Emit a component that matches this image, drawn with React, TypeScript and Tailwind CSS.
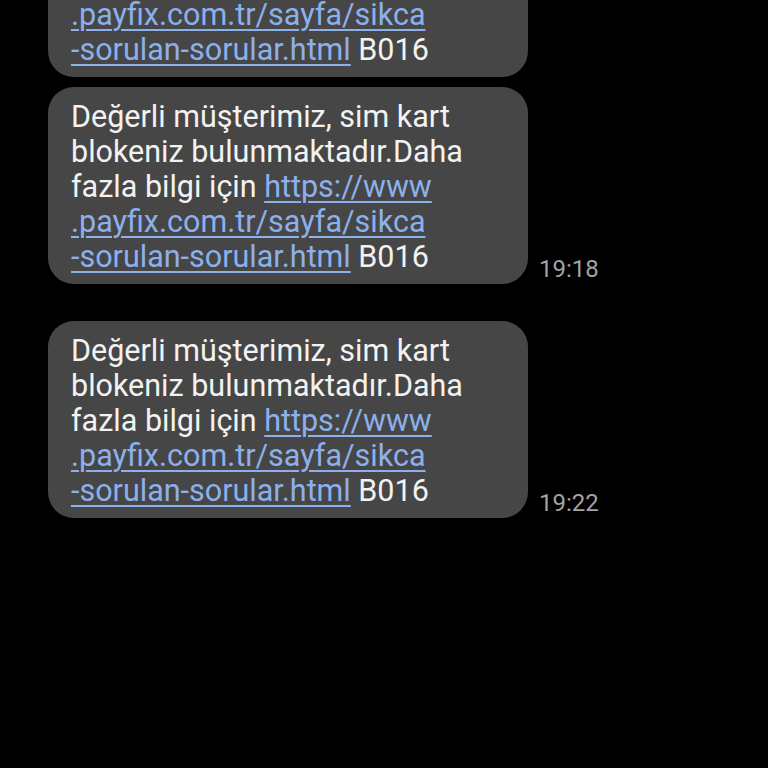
const messages = [
  { id: 1, time: "", groupGap: false },
  { id: 2, time: "19:18", groupGap: false },
  { id: 3, time: "19:22", groupGap: true },
];

function Bubble() {
  return (
    <div className="w-[480px] shrink-0 rounded-[26px] bg-[#464646] pl-[23px] pr-4 pt-[12px] pb-[10px] text-[30.5px] leading-[35px] text-[#f2f2f2]">
      Değerli müşterimiz, sim kart
      <br />
      blokeniz bulunmaktadır.Daha
      <br />
      fazla bilgi için{" "}
      <span className="text-[#8cb0ec] underline decoration-[1.5px] underline-offset-[4px]">
        https://www
      </span>
      <br />
      <span className="text-[#8cb0ec] underline decoration-[1.5px] underline-offset-[4px]">
        .payfix.com.tr/sayfa/sikca
      </span>
      <br />
      <span className="text-[#8cb0ec] underline decoration-[1.5px] underline-offset-[4px]">
        -sorulan-sorular.html
      </span>{" "}
      B016
    </div>
  );
}

export default function App() {
  return (
    <div
      className="h-[768px] w-[768px] overflow-hidden bg-black"
      style={{ fontFamily: "Roboto, 'Noto Sans', sans-serif" }}
    >
      <div className="mt-[-120px] flex flex-col pl-[48px]">
        {messages.map((m) => (
          <div
            key={m.id}
            className={`flex items-end gap-[11px] ${
              m.id === 1 ? "" : m.groupGap ? "mt-[37px]" : "mt-[10px]"
            }`}
          >
            <Bubble />
            {m.time && (
              <span className="mb-[1px] text-[24px] leading-[28px] text-[#a3a3a3]">
                {m.time}
              </span>
            )}
          </div>
        ))}
      </div>
    </div>
  );
}
